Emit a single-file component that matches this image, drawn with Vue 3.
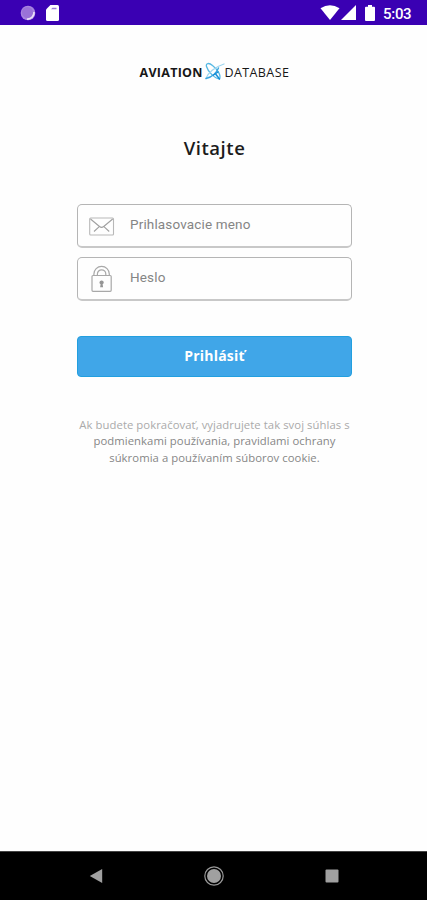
<script setup>
import { ref } from 'vue'

const username = ref('')
const password = ref('')
</script>

<template>
  <div class="screen">
    <header class="status">
      <div class="status-left">
        <svg width="16" height="16" viewBox="0 0 16 16">
          <circle cx="8" cy="8" r="7.300" fill="#a884df" />
          <circle cx="7.500" cy="7.500" r="5.500" fill="#9a72d8" />
          <path d="M14 7A6.300 6.300 0 0 1 7 14" fill="none" stroke="#e9def8" stroke-width="1.700" />
        </svg>
        <svg width="13" height="16" viewBox="0 0 13 16">
          <path d="M4.400 0H11.500Q13 0 13 1.500V14.500Q13 16 11.500 16H1.500Q0 16 0 14.500V4.500Z" fill="#fff" />
          <path d="M5 4.200L6.500 2.700H10.500V4.200Z" fill="#9c7bd8" />
        </svg>
      </div>
      <div class="status-right">
        <svg width="20" height="15" viewBox="0 0 20 15">
          <path d="M.5 3.200Q10-2.600 19.500 3.200L10 15Z" fill="#fff" />
        </svg>
        <svg class="signal" width="15" height="15" viewBox="0 0 15 15">
          <path d="M15 0V15H0Z" fill="#fff" />
        </svg>
        <svg class="battery" width="10" height="16" viewBox="0 0 10 16">
          <path d="M3 0H7V1.700H9Q10 1.700 10 2.700V15Q10 16 9 16H1Q0 16 0 15V2.700Q0 1.700 1 1.700H3Z" fill="#fff" />
        </svg>
        <span class="clock">5:03</span>
      </div>
    </header>

    <main class="content">
      <div class="logo">
        <span class="logo-bold">AVIATION</span>
        <svg class="logo-mark" width="21" height="20" viewBox="0 0 21 20">
          <g fill="none" stroke-linecap="round" stroke-linejoin="round">
            <path d="M15.500 17C11 16.500 4 10 2.500 4.500C1.500 1 5 .5 8.500 3.500C13 7 17.500 13 15.500 17Z" stroke="#55b8e4" stroke-width="1.300" />
            <path d="M2 16.500C4 11 10.500 5 20 2" stroke="#9ed6ee" stroke-width="1.300" />
            <path d="M2 16.500C6.500 15.500 12 12 14.500 6" stroke="#3aa5df" stroke-width="1.400" />
            <path d="M9.500 13L14 10M12 12.500L15.500 17" stroke="#168fd8" stroke-width="1.500" />
          </g>
        </svg>
        <span class="logo-light">DATABASE</span>
      </div>

      <h1 class="title">Vitajte</h1>

      <form class="form" @submit.prevent>
        <label class="field">
          <svg class="icon" width="26" height="28" viewBox="0 0 26 28">
            <g fill="none" stroke="#b8b8b8" stroke-width="1.100">
              <rect x=".7" y="6" width="23.800" height="17" rx="1" />
              <path d="M1.500 7L10.500 14.500Q12.600 16.200 14.700 14.500L23.700 7M5 19.500L10 14.800M20.200 19.500L15.200 14.800" stroke="#a0a0a0" />
            </g>
          </svg>
          <input v-model="username" type="text" placeholder="Prihlasovacie meno" />
        </label>
        <label class="field">
          <svg class="icon" width="26" height="28" viewBox="0 0 26 28">
            <g fill="none" stroke="#a8a8a8" stroke-width="1.200">
              <rect x="3" y="10.500" width="19.200" height="15.800" rx="1" />
              <path d="M4.900 10.500V9A7.700 7.700 0 0 1 20.300 9V10.500M8.400 10.500V9A4.200 4.200 0 0 1 16.800 9V10.500" />
            </g>
            <path d="M12.600 15.500a2.100 2 0 0 1 1 3.800l.5 2.900h-3l.5-2.900a2.100 2 0 0 1 1-3.800Z" fill="#959595" />
          </svg>
          <input v-model="password" type="password" placeholder="Heslo" />
        </label>
        <button class="submit" type="submit">Prihlásiť</button>
      </form>

      <p class="terms">
        <span class="first">Ak budete pokračovať, vyjadrujete tak svoj súhlas s</span>
        <span>podmienkami používania, pravidlami ochrany</span>
        <span>súkromia a používaním súborov cookie.</span>
      </p>
    </main>

    <nav class="navbar">
      <svg width="14" height="16" viewBox="0 0 14 16"><path d="M13.200 1V15L.8 8Z" fill="#a0a0a0" /></svg>
      <svg width="20" height="20" viewBox="0 0 20 20">
        <circle cx="10" cy="10" r="9.200" fill="none" stroke="#999" stroke-width="1.200" />
        <circle cx="10" cy="10" r="7" fill="#a0a0a0" />
      </svg>
      <svg width="14" height="14" viewBox="0 0 14 14"><rect x=".5" y=".5" width="13" height="13" rx="1" fill="#a0a0a0" /></svg>
    </nav>
  </div>
</template>

<style>
body {
  margin: 0;
  background: #fff;
}
</style>

<style scoped>
.screen {
  width: 427px;
  height: 900px;
  display: flex;
  flex-direction: column;
  background: #fefefe;
  font-family: "Open Sans", "Noto Sans", sans-serif;
  overflow: hidden;
}
svg {
  display: block;
  flex: none;
}
.status {
  box-sizing: border-box;
  height: 25px;
  flex: none;
  display: flex;
  justify-content: space-between;
  padding: 0 16px 0 20px;
  background: #3a00b3;
}
.status-left,
.status-right {
  display: flex;
  align-items: center;
}
.status-left {
  gap: 10px;
}
.signal {
  margin-left: 1px;
}
.battery {
  margin: 0 8px 0 9px;
}
.clock {
  color: #fff;
  font: 500 15px/24px Roboto, sans-serif;
  padding-top: 2px;
  width: 28px;
  letter-spacing: -0.300px;
}
.content {
  flex: 1;
  display: flex;
  flex-direction: column;
  align-items: center;
  padding-left: 2px;
}
.logo {
  display: flex;
  align-items: center;
  height: 20px;
  width: 150px;
  margin-top: 38px;
  font-size: 12.500px;
  line-height: 20px;
  color: #171717;
  white-space: nowrap;
}
.logo-bold {
  width: 64px;
  font-weight: 700;
  letter-spacing: 0.280px;
}
.logo-mark {
  margin: -2px 0 0;
}
.logo-light {
  letter-spacing: 0.400px;
}
.title {
  margin: 53px 0 0;
  font-size: 18.500px;
  font-weight: 600;
  line-height: 24px;
  letter-spacing: 0.550px;
  color: #1c1c1c;
}
.form {
  width: 275px;
  margin-top: 44px;
  display: flex;
  flex-direction: column;
  gap: 9px;
}
.field {
  box-sizing: border-box;
  height: 44px;
  display: flex;
  align-items: center;
  padding: 0 11px;
  border: 1px solid #b5b5b5;
  border-bottom: 2px solid #c8c8c8;
  border-radius: 5px;
}
.field input {
  flex: 1;
  min-width: 0;
  margin: 0 0 3px 15px;
  padding: 0;
  border: 0;
  outline: 0;
  background: transparent;
  color: #333;
  font: 400 13.500px/20px Roboto, sans-serif;
  letter-spacing: 0.150px;
}
.field input::placeholder {
  color: #858585;
  opacity: 1;
}
.submit {
  height: 41px;
  margin-top: 26px;
  padding: 0 0 2px;
  border: 1px solid #229fdf;
  border-radius: 4px;
  background: #40a6e8;
  color: #fff;
  font: 700 14px/20px "Open Sans", sans-serif;
  letter-spacing: 0.180px;
}
.terms {
  margin: 40px 0 0;
  display: flex;
  flex-direction: column;
  align-items: center;
  font-size: 11.300px;
  letter-spacing: 0.060px;
  line-height: 16.300px;
  color: #868686;
  white-space: nowrap;
}
.first {
  color: #aaa;
}
.navbar {
  box-sizing: border-box;
  height: 49px;
  flex: none;
  display: flex;
  align-items: center;
  justify-content: space-between;
  padding: 0 88px 0 89px;
  background: #000;
  border-top: 1px solid #444;
}
</style>
